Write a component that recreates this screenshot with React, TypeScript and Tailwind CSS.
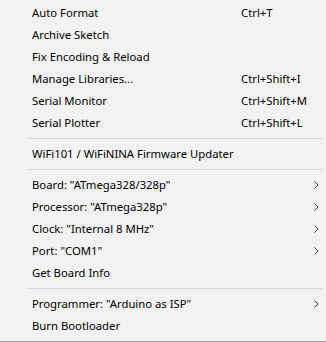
import React from 'react';

type Item =
  | { kind: 'item'; label: string; shortcut?: string; submenu?: boolean }
  | { kind: 'sep' };

const items: Item[] = [
  { kind: 'item', label: 'Auto Format', shortcut: 'Ctrl+T' },
  { kind: 'item', label: 'Archive Sketch' },
  { kind: 'item', label: 'Fix Encoding & Reload' },
  { kind: 'item', label: 'Manage Libraries...', shortcut: 'Ctrl+Shift+I' },
  { kind: 'item', label: 'Serial Monitor', shortcut: 'Ctrl+Shift+M' },
  { kind: 'item', label: 'Serial Plotter', shortcut: 'Ctrl+Shift+L' },
  { kind: 'sep' },
  { kind: 'item', label: 'WiFi101 / WiFiNINA Firmware Updater' },
  { kind: 'sep' },
  { kind: 'item', label: 'Board: "ATmega328/328p"', submenu: true },
  { kind: 'item', label: 'Processor: "ATmega328p"', submenu: true },
  { kind: 'item', label: 'Clock: "Internal 8 MHz"', submenu: true },
  { kind: 'item', label: 'Port: "COM1"', submenu: true },
  { kind: 'item', label: 'Get Board Info' },
  { kind: 'sep' },
  { kind: 'item', label: 'Programmer: "Arduino as ISP"', submenu: true },
  { kind: 'item', label: 'Burn Bootloader' },
];

// маленькая стрелка подменю
const Chevron = () => (
  <svg width="5" height="8" viewBox="0 0 5 8" className="block">
    <path d="M0.5 0.5 L4 4 L0.5 7.5" fill="none" stroke="#3c3c3c" strokeWidth="1" />
  </svg>
);

export default function App() {
  return (
    <div className="w-[326px] h-[342px] bg-[#f2f2f2] border-b border-[#a0a0a0] pt-[2px] overflow-hidden text-[11.3px] text-black [font-family:'Segoe_UI','Noto_Sans',sans-serif]">
      {items.map((it, i) =>
        it.kind === 'sep' ? (
          <div key={i} className="h-[9px] flex items-center pl-[29px] pr-[4px]">
            <div className="h-px w-full bg-[#d7d7d7]" />
          </div>
        ) : (
          <div key={i} className="h-[22px] flex items-center pl-[32px] pr-[7px]">
            <span className="w-[209px] whitespace-nowrap">{it.label}</span>
            <span className="flex-1 whitespace-nowrap">{it.shortcut}</span>
            {it.submenu && <Chevron />}
          </div>
        )
      )}
    </div>
  );
}
